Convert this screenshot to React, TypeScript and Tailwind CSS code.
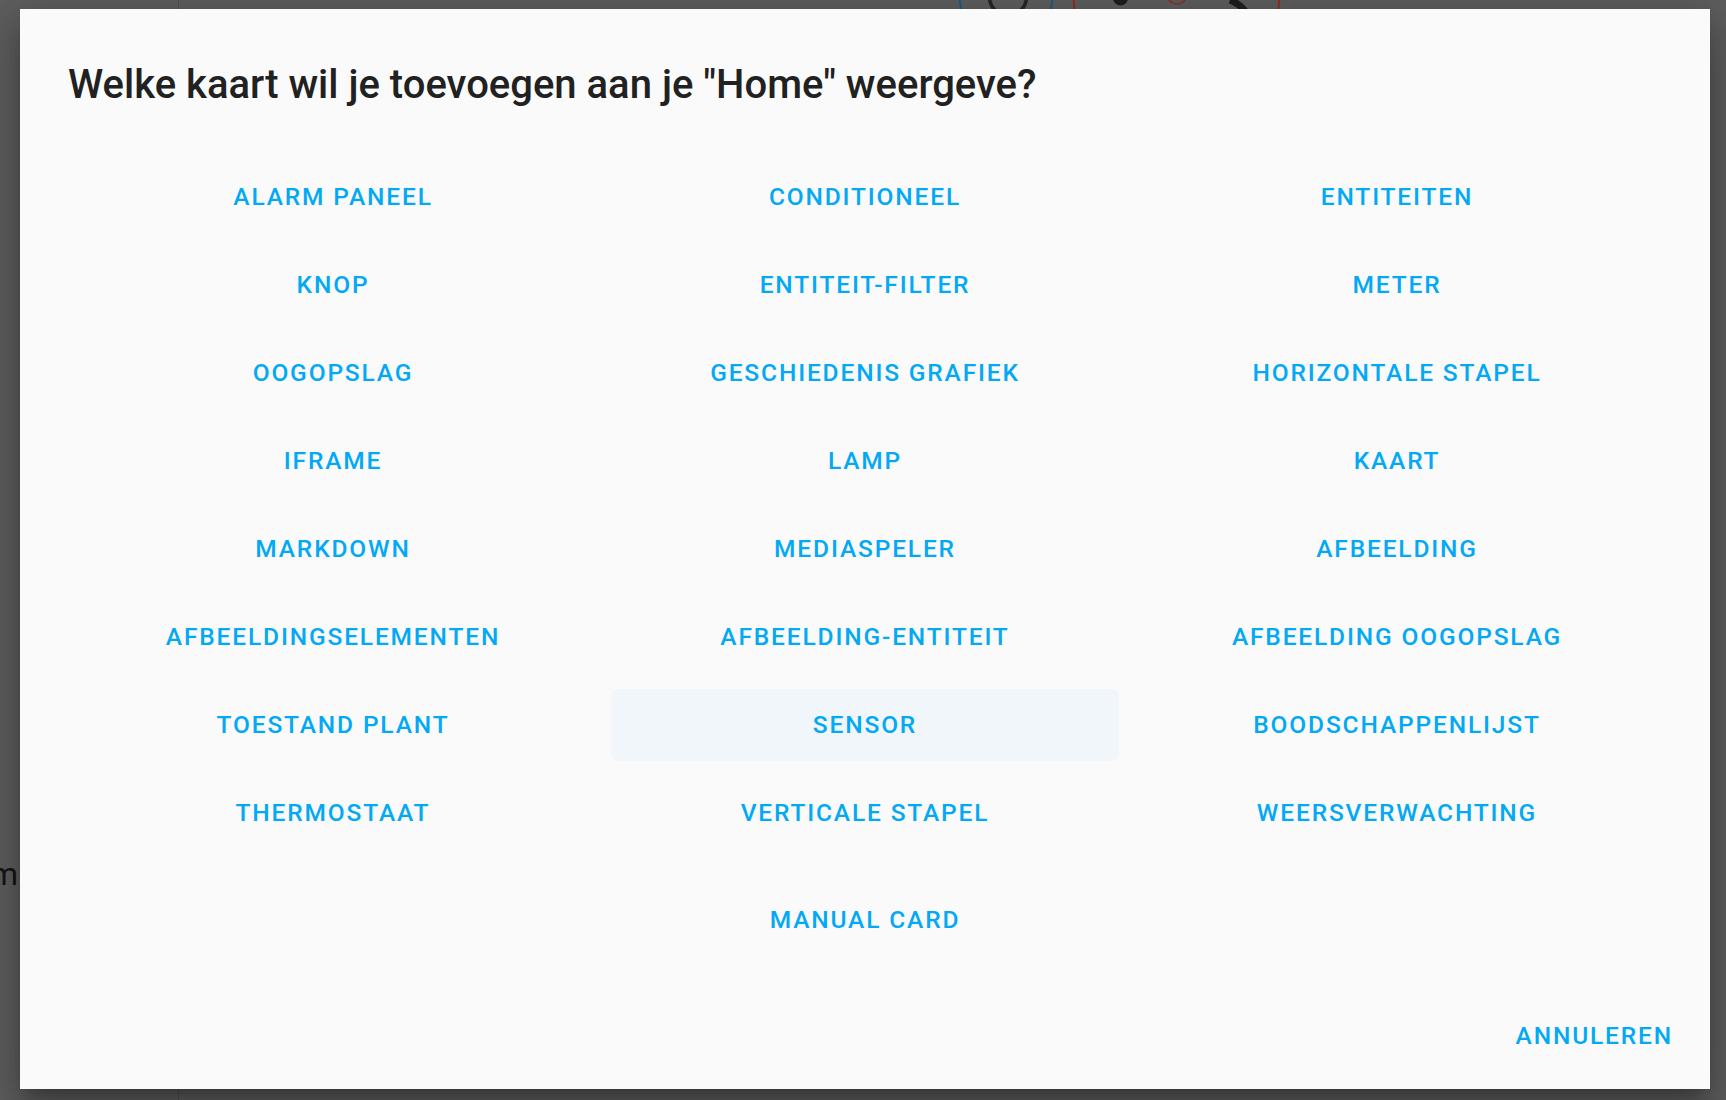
import React from "react";

const CARDS = [
  "Alarm paneel",
  "Conditioneel",
  "Entiteiten",
  "Knop",
  "Entiteit-filter",
  "Meter",
  "Oogopslag",
  "Geschiedenis grafiek",
  "Horizontale stapel",
  "iFrame",
  "Lamp",
  "Kaart",
  "Markdown",
  "Mediaspeler",
  "Afbeelding",
  "Afbeeldingselementen",
  "Afbeelding-entiteit",
  "Afbeelding oogopslag",
  "Toestand plant",
  "Sensor",
  "Boodschappenlijst",
  "Thermostaat",
  "Verticale stapel",
  "Weersverwachting",
];

const FONT = { fontFamily: "Roboto, 'Noto Sans', sans-serif" };

function CardButton({ label, active }: { label: string; active?: boolean }) {
  return (
    <button
      className={
        "h-[72px] w-full flex items-center justify-center rounded-lg text-[24.5px] font-medium uppercase tracking-[1.85px] text-[#03a9f4] " +
        (active ? "bg-[#f0f6fa]" : "bg-transparent")
      }
    >
      {label}
    </button>
  );
}

// bits of the lovelace cards peeking out above the dialog
function Backdrop() {
  return (
    <svg className="absolute left-0 top-0 pointer-events-none" width={1726} height={14}>
      <circle cx={1006} cy={-4} r={46.5} fill="none" stroke="#1d5b86" strokeWidth={2} />
      <circle cx={1008} cy={-3} r={18.5} fill="none" stroke="#262626" strokeWidth={3.5} />
      <circle cx={1176.5} cy={-6} r={103} fill="none" stroke="#8f2f1e" strokeWidth={2} />
      <circle cx={1177} cy={-6} r={10} fill="none" stroke="#8f2f1e" strokeWidth={1.5} />
      <circle cx={1120.5} cy={-2} r={7.5} fill="#1e1e1e" />
      <path d="M1230 0 Q1240 4 1246 12" fill="none" stroke="#1e1e1e" strokeWidth={7} />
    </svg>
  );
}

export default function App() {
  return (
    <div className="relative w-[1726px] h-[1100px] overflow-hidden bg-[#5e5e5e]" style={FONT}>
      <Backdrop />
      <div className="absolute left-[178px] top-0 h-full w-px bg-[#505050]" />
      <span className="absolute left-[-10px] top-[858px] text-[32px] leading-[32px] text-[#151515]">m</span>

      <div className="absolute left-[20px] top-[9px] w-[1690px] h-[1080px] flex flex-col bg-[#fafafa] shadow-[0_11px_15px_-7px_rgba(0,0,0,0.25),0_24px_38px_3px_rgba(0,0,0,0.18),0_9px_46px_8px_rgba(0,0,0,0.15)]">
        <h2 className="pt-[52px] px-[48px] text-[40px] leading-[48px] font-medium text-[#212121]">
          Welke kaart wil je toevoegen aan je "Home" weergeve?
        </h2>

        <div className="mt-[52px] px-[59px] grid grid-cols-3 gap-x-6 gap-y-4">
          {CARDS.map((c) => (
            <CardButton key={c} label={c} active={c === "Sensor"} />
          ))}
        </div>

        <div className="mt-[35px] flex justify-center">
          <div className="w-[508px]">
            <CardButton label="Manual card" />
          </div>
        </div>

        <div className="mt-auto flex justify-end pr-[23px] pb-[17px]">
          <button className="h-[72px] px-[14px] text-[24.5px] font-medium uppercase tracking-[1.85px] text-[#03a9f4]">
            Annuleren
          </button>
        </div>
      </div>
    </div>
  );
}
